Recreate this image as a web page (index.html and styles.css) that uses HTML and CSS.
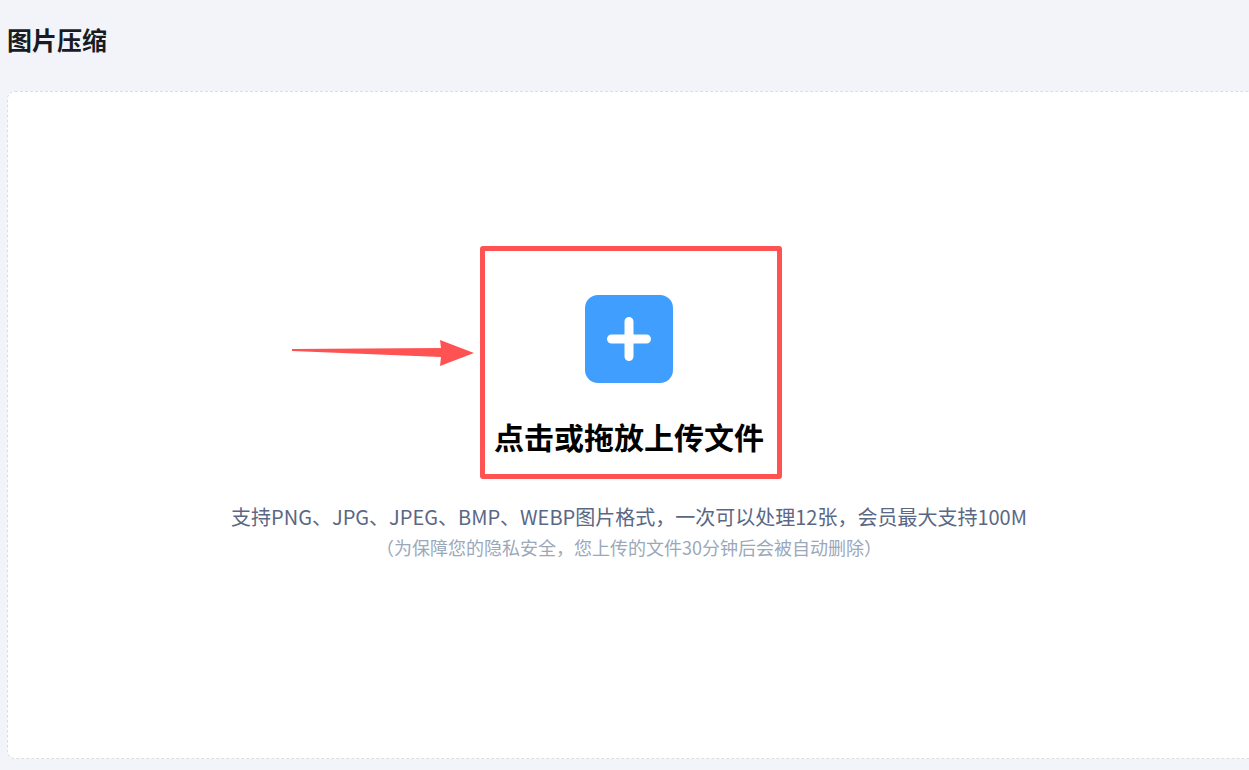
FILE: index.html
```
<!DOCTYPE html>
<html lang="zh-CN">

<head>
    <meta charset="UTF-8">
    <meta name="viewport" content="width=device-width, initial-scale=1.0" />
    <title>图片压缩</title>
    <link rel="stylesheet" href="styles.css">
</head>

<body>
    <h1 class="title">图片压缩</h1>
    <main class="dropzone">
        <div class="upload">
            <button type="button" class="upload-btn">
                <svg class="upload-icon" viewBox="0 0 88 88" aria-hidden="true">
                    <rect width="88" height="88" rx="13" fill="#409eff" />
                    <path d="M44 26.500V61.500M26.500 44H61.500" stroke="#fff" stroke-width="9" stroke-linecap="round" />
                </svg>
                <span>点击或拖放上传文件</span>
            </button>
            <!-- 标注：红框和箭头 -->
            <div class="mark-box"></div>
            <svg class="mark-arrow" viewBox="0 0 182 28" aria-hidden="true">
                <path d="M0 10L149 9L148 1L182 14L148 27L149 18L0 12Z" fill="#ff5252" />
            </svg>
        </div>
        <p class="tip">支持PNG、JPG、JPEG、BMP、WEBP图片格式，一次可以处理12张，会员最大支持100M</p>
        <p class="note">（为保障您的隐私安全，您上传的文件30分钟后会被自动删除）</p>
    </main>
</body>

</html>
```

FILE: styles.css
```
* {
    box-sizing: border-box;
}

body {
    display: flex;
    flex-direction: column;
    min-height: 100vh;
    margin: 0;
    padding: 20px 0 11px 7px;
    overflow-x: hidden;
    background-color: #f3f4f9;
    font-family: "Noto Sans CJK SC", "Liberation Sans", sans-serif;
}

.title {
    margin: 0 0 33px;
    color: #191b23;
    font-size: 25px;
    line-height: 38px;
}

.dropzone {
    display: flex;
    flex: 1;
    flex-direction: column;
    align-items: center;
    justify-content: center;
    margin-right: -2px;
    padding-top: 7px;
    border: 1px dashed #dcdde3;
    border-radius: 8px 0 0 8px;
    background-color: #fff;
    text-align: center;
}

.upload {
    position: relative;
    margin-bottom: 44px;
}

.upload-btn {
    display: flex;
    flex-direction: column;
    align-items: center;
    gap: 32px;
    padding: 0;
    border: 0;
    background: none;
    color: #000;
    font-family: inherit;
    font-size: 30px;
    font-weight: bold;
    line-height: 42px;
    cursor: pointer;
}

.upload-icon {
    width: 88px;
    height: 88px;
}

.mark-box {
    position: absolute;
    top: -49px;
    right: -18px;
    bottom: -22px;
    left: -14px;
    border: 5px solid #ff5252;
    border-radius: 3px;
    pointer-events: none;
}

.mark-arrow {
    position: absolute;
    top: 44px;
    right: 290px;
    width: 182px;
    height: 28px;
    pointer-events: none;
}

.tip,
.note {
    margin: 0;
    line-height: 31px;
}

.tip {
    color: #5a6785;
    font-size: 20px;
}

.note {
    color: #9ba8ba;
    font-size: 18px;
}
```
